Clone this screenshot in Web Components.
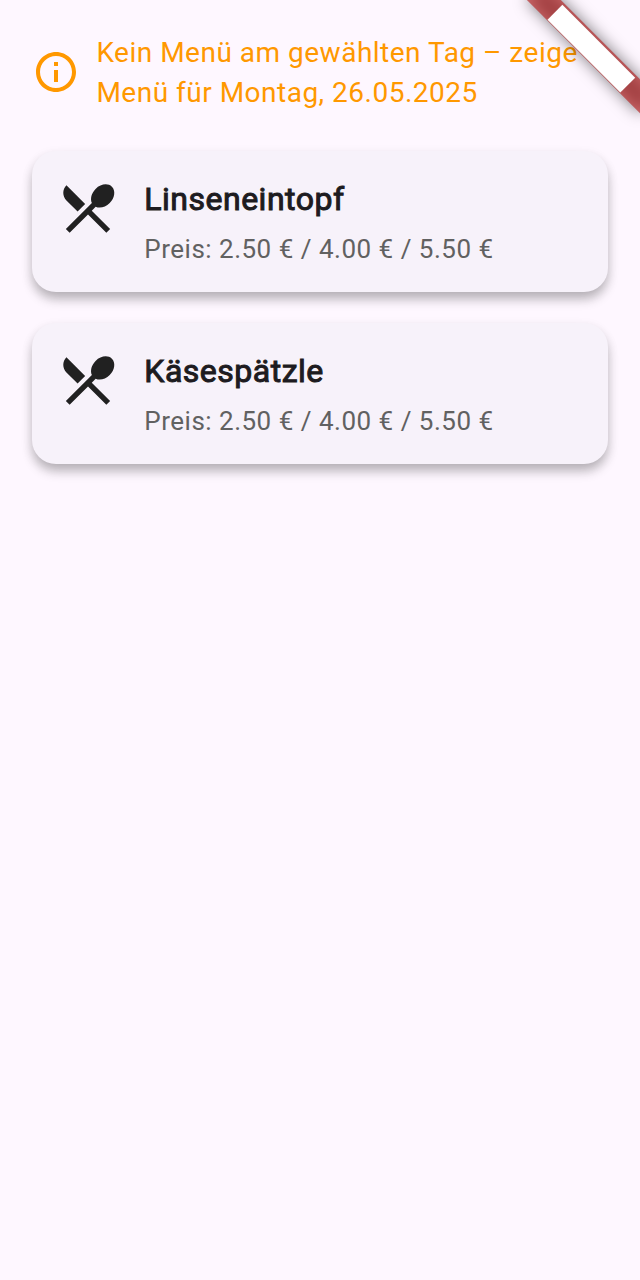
<!DOCTYPE html>
<html lang="de">
<head>
<meta charset="utf-8">
<title>Speiseplan</title>
<style>
html, body { margin: 0; height: 100%; background: #fef7ff; }
</style>
</head>
<body>
<menu-page></menu-page>
<script>
class MenuPage extends HTMLElement {
  constructor() {
    super();
    this.attachShadow({ mode: 'open' }).innerHTML = `
      <style>
        :host { display: flex; flex-direction: column; box-sizing: border-box; position: relative; overflow: hidden;
          min-height: 100vh; padding: 32px; gap: 31px; background: #fef7ff; color: #1d1b20; font-family: Roboto, sans-serif; }
        menu-notice { margin-bottom: 8px; }
        corner-banner { position: absolute; top: 0; right: 0; }
      </style>
      <menu-notice>Kein Menü am gewählten Tag – zeige Menü für Montag, 26.05.2025</menu-notice>
      <menu-card><span slot="title">Linseneintopf</span><span slot="price">Preis: 2.50 € / 4.00 € / 5.50 €</span></menu-card>
      <menu-card><span slot="title">Käsespätzle</span><span slot="price">Preis: 2.50 € / 4.00 € / 5.50 €</span></menu-card>
      <corner-banner></corner-banner>`;
  }
}
class MenuNotice extends HTMLElement {
  constructor() {
    super();
    this.attachShadow({ mode: 'open' }).innerHTML = `
      <style>
        :host { display: flex; align-items: center; gap: 16px; height: 80px; color: #ff9800; font-size: 28px; line-height: 40px; letter-spacing: 0.5px; }
        svg { width: 48px; height: 48px; flex: none; fill: currentColor; }
        p { margin: 0; flex: 1; padding: 2px 0 0 0.4px; }
      </style>
      <svg viewBox="0 0 24 24"><path d="M11 7h2v2h-2zm0 4h2v6h-2zm1-9C6.48 2 2 6.48 2 12s4.480 10 10 10 10-4.480 10-10S17.520 2 12 2zm0 18c-4.410 0-8-3.590-8-8s3.590-8 8-8 8 3.590 8 8-3.590 8-8 8z"/></svg>
      <p><slot></slot></p>`;
  }
}
class MenuCard extends HTMLElement {
  constructor() {
    super();
    this.attachShadow({ mode: 'open' }).innerHTML = `
      <style>
        :host { display: flex; box-sizing: border-box; height: 141px; padding: 25px 24px 24px; gap: 24px; border-radius: 24px; background: #f7f2fa;
          box-shadow: 0 8px 12px -1px rgba(0,0,0,.24), 0 4px 12px rgba(0,0,0,.09); }
        svg { width: 64px; height: 64px; flex: none; fill: #212121; }
        .text { display: flex; flex-direction: column; gap: 8px; margin-top: -1px; padding-left: 0.3px; }
        .title { font-size: 32px; line-height: 48px; letter-spacing: 0.5px; -webkit-text-stroke: 1px currentColor; }
        .price { font-size: 26px; line-height: 36px; letter-spacing: 0.5px; color: #616161; }
      </style>
      <svg viewBox="0 0 24 24"><path d="M8.100 13.340l2.830-2.830L3.910 3.500c-1.560 1.560-1.560 4.090 0 5.660l4.190 4.180zm6.780-1.810c1.530.71 3.680.21 5.270-1.380 1.910-1.910 2.280-4.650.81-6.120-1.460-1.460-4.200-1.100-6.120.81-1.590 1.590-2.090 3.740-1.380 5.270L3.700 19.870l1.410 1.410L12 14.410l6.880 6.880 1.410-1.410L13.410 13l1.470-1.470z"/></svg>
      <div class="text"><div class="title"><slot name="title"></slot></div><div class="price"><slot name="price"></slot></div></div>`;
  }
}
class CornerBanner extends HTMLElement {
  constructor() {
    super();
    this.attachShadow({ mode: 'open' }).innerHTML = `
      <style>
        :host { display: block; width: 160px; height: 160px; pointer-events: none; }
        svg { display: block; }
      </style>
      <svg width="160" height="160" viewBox="0 0 160 160">
        <defs><filter id="soft" x="-60" y="-60" width="340" height="340" filterUnits="userSpaceOnUse" primitiveUnits="userSpaceOnUse" color-interpolation-filters="sRGB"><feGaussianBlur stdDeviation="7.900"/></filter></defs>
        <g filter="url(#soft)"><rect x="-80" y="56" width="160" height="24" fill="#000" fill-opacity=".5" transform="translate(160 0) rotate(45)"/></g>
        <g transform="translate(160 0) rotate(45)">
          <rect x="-80" y="56" width="160" height="24" fill="#b71c1c" fill-opacity=".627"/>
          <rect x="-51.500" y="58.300" width="103" height="21" fill="#fff"/>
        </g>
      </svg>`;
  }
}
customElements.define('menu-notice', MenuNotice);
customElements.define('menu-card', MenuCard);
customElements.define('corner-banner', CornerBanner);
customElements.define('menu-page', MenuPage);
</script>
</body>
</html>
